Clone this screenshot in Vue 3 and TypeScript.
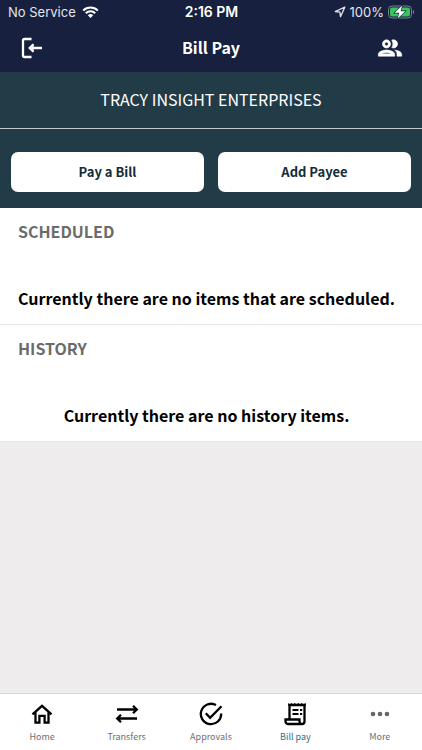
<script setup lang="ts">
import { ref } from 'vue'

interface Section {
  title: string
  message: string
}

interface Tab {
  id: string
  label: string
}

const company = 'TRACY INSIGHT ENTERPRISES'

const sections: Section[] = [
  { title: 'SCHEDULED', message: 'Currently there are no items that are scheduled.' },
  { title: 'HISTORY', message: 'Currently there are no history items.' },
]

const tabs: Tab[] = [
  { id: 'home', label: 'Home' },
  { id: 'transfers', label: 'Transfers' },
  { id: 'approvals', label: 'Approvals' },
  { id: 'billpay', label: 'Bill pay' },
  { id: 'more', label: 'More' },
]

const activeTab = ref<string>('billpay')
</script>

<template>
  <div class="app">
    <header class="top">
      <div class="status">
        <div class="status-left">
          <span>No Service</span>
          <svg class="wifi" viewBox="0 0 17 12" aria-hidden="true">
            <path d="M1.2 4.6a10.4 10.4 0 0 1 14.6 0" />
            <path d="M3.8 7.3a6.6 6.6 0 0 1 9.4 0" />
            <path class="solid" d="M8.5 12 5.8 9.3a3.8 3.8 0 0 1 5.4 0z" />
          </svg>
        </div>
        <span class="clock">2:16 PM</span>
        <div class="status-right">
          <svg class="location" viewBox="0 0 12 12" aria-hidden="true">
            <path d="M10.8 1.2 1.3 5.5l4.6.6.6 4.6z" />
          </svg>
          <span>100%</span>
          <svg class="battery" viewBox="0 0 27 14" aria-hidden="true">
            <rect x="0.5" y="1" width="23" height="12" rx="3.6" fill="none" stroke="#7d8396" />
            <rect x="2" y="2.5" width="20" height="9" rx="2.2" fill="#35c759" />
            <path d="M25 5v4c1.6-.5 1.6-3.5 0-4z" fill="#7d8396" />
            <path d="M14.2.5 6.7 7.8h4.6L9.6 13.5l7.7-7.3h-4.7z" fill="#fff" stroke="#17203e" stroke-width="1.2" paint-order="stroke" />
          </svg>
        </div>
      </div>
      <div class="nav">
        <button class="icon-button" type="button" aria-label="Log out">
          <svg class="logout" viewBox="0 0 22 22" aria-hidden="true">
            <path d="M10.5 2H3.5Q2 2 2 3.5v15Q2 20 3.5 20h7M21 11H9M12.5 7.2 8.7 11l3.8 3.8" />
            <path class="head" d="M12.5 7.2 8.7 11l3.8 3.8z" />
          </svg>
        </button>
        <h1>Bill Pay</h1>
        <button class="icon-button" type="button" aria-label="Payees">
          <svg class="people" viewBox="0 0 24 24" aria-hidden="true">
            <path d="M9 13.75c-2.34 0-7 1.17-7 3.5V19h14v-1.75c0-2.33-4.66-3.5-7-3.5zM4.34 17c.84-.58 2.87-1.25 4.66-1.25s3.82.67 4.66 1.25H4.34zM9 12c1.93 0 3.5-1.57 3.5-3.5S10.93 5 9 5 5.5 6.57 5.5 8.5 7.07 12 9 12zm0-5c.83 0 1.5.67 1.5 1.5S9.83 10 9 10s-1.5-.67-1.5-1.5S8.17 7 9 7zm7.04 6.81c1.16.84 1.96 1.96 1.96 3.44V19h4v-1.75c0-2.02-3.5-3.17-5.96-3.44zM15 12c1.93 0 3.5-1.57 3.5-3.5S16.93 5 15 5c-.54 0-1.04.13-1.5.35.63.89 1 1.98 1 3.15s-.37 2.26-1 3.15c.46.22.96.35 1.5.35z" />
          </svg>
        </button>
      </div>
    </header>

    <main>
      <h2 class="company">{{ company }}</h2>
      <div class="actions">
        <button class="action" type="button">Pay a Bill</button>
        <button class="action" type="button">Add Payee</button>
      </div>
      <section v-for="section in sections" :key="section.title" class="section">
        <h3>{{ section.title }}</h3>
        <p>{{ section.message }}</p>
      </section>
    </main>

    <nav class="tabs" aria-label="Main">
      <button
        v-for="tab in tabs"
        :key="tab.id"
        class="tab"
        :class="{ active: tab.id === activeTab }"
        type="button"
        @click="activeTab = tab.id"
      >
        <svg v-if="tab.id === 'home'" viewBox="0 0 24 24" aria-hidden="true">
          <path d="M2.5 12.3 12 3.8l9.5 8.5M5.5 10.5v10.1h3.9v-6.8h5.2v6.8h3.9V10.5" />
        </svg>
        <svg v-else-if="tab.id === 'transfers'" viewBox="0 0 24 24" aria-hidden="true">
          <path d="M2 7.5h19.5M18 3.7l3.8 3.8L18 11.3M22 16.5H2.5M6 12.7l-3.8 3.8L6 20.3" />
        </svg>
        <svg v-else-if="tab.id === 'approvals'" viewBox="0 0 24 24" aria-hidden="true">
          <path d="M17 3.1A10.2 10.2 0 1 0 22.2 11.5M6.8 11.3l4.3 4.5L22.5 4.3" />
        </svg>
        <svg v-else-if="tab.id === 'billpay'" viewBox="0 0 24 24" aria-hidden="true">
          <path d="M6.5 17V3h15v16.5a2.5 2.5 0 0 1-2.5 2.5H5a2.5 2.5 0 0 1-2.5-2.5V17.5H16.5v2a2.5 2.5 0 0 0 2.5 2.5" />
          <path class="thin" d="M9.5 8h6M17 8h2.2M9.5 12h6M17 12h2.2" />
          <path class="teeth" d="m5.3 1 1.6 1.5L8.5 1l1.7 1.5L11.9 1l1.7 1.5L15.3 1 17 2.5 18.7 1l1.6 1.5L22.7 1v3H5.3z" />
        </svg>
        <svg v-else viewBox="0 0 24 24" aria-hidden="true">
          <g class="dots">
            <circle cx="5" cy="12" r="2.3" />
            <circle cx="12" cy="12" r="2.3" />
            <circle cx="19" cy="12" r="2.3" />
          </g>
        </svg>
        <span>{{ tab.label }}</span>
      </button>
    </nav>
  </div>
</template>

<style>
body {
  margin: 0;
  background: #eeeced;
}
</style>

<style scoped>
.app {
  display: flex;
  flex-direction: column;
  min-height: 100vh;
  background: #eeeced;
  font-family: "Noto Sans CJK SC", "Noto Sans", sans-serif;
}

h1,
h2,
h3,
p {
  margin: 0;
}

button {
  padding: 0;
  border: 0;
  background: none;
  font-family: inherit;
  cursor: pointer;
}

svg {
  display: block;
}

.top {
  background: #17203e;
  color: #fff;
}

.status {
  display: grid;
  grid-template-columns: 1fr auto 1fr;
  align-items: center;
  height: 24px;
  padding: 0 7px 0 8px;
  font-family: Inter, sans-serif;
  font-size: 13px;
  color: #e4e6ec;
}

.status-left,
.status-right {
  display: flex;
  align-items: center;
  gap: 6px;
}

.status-right {
  justify-content: flex-end;
  gap: 4px;
}

.clock {
  font-size: 14px;
  line-height: 16px;
  font-weight: 600;
  color: #fff;
}

.wifi {
  width: 17px;
  height: 12px;
  fill: none;
  stroke: #fff;
  stroke-width: 2;
}

.wifi .solid {
  fill: #fff;
  stroke: none;
}

.location {
  width: 12px;
  height: 12px;
  fill: none;
  stroke: #e4e6ec;
  stroke-width: 1.3;
  stroke-linejoin: round;
}

.battery {
  width: 27px;
  height: 14px;
}

.nav {
  display: flex;
  align-items: center;
  justify-content: space-between;
  height: 48px;
  padding: 0 18px;
}

.icon-button {
  color: #fff;
}

.logout {
  width: 28px;
  height: 22px;
  fill: none;
  stroke: currentColor;
  stroke-width: 2.3;
}

.logout .head {
  fill: currentColor;
  stroke: none;
}

.people {
  width: 28px;
  height: 28px;
  fill: currentColor;
  stroke: currentColor;
  stroke-width: 0.5;
}

h1 {
  padding-bottom: 2px;
  font-size: 16px;
  line-height: 24px;
  font-weight: 700;
}

.company {
  padding: 15px 12px 17px;
  border-bottom: 1px solid #c3cacd;
  background: #223c47;
  color: #fff;
  font-size: 16px;
  line-height: 24px;
  font-weight: 400;
  text-align: center;
}

.actions {
  display: flex;
  gap: 14px;
  padding: 23px 11px 16px;
  background: #223c47;
}

.action {
  flex: 1;
  height: 40px;
  border-radius: 7px;
  background: #fff;
  color: #122c38;
  font-size: 13px;
  line-height: 20px;
  font-weight: 700;
}

.section {
  padding: 11px 27px 14px 18px;
  border-bottom: 1px solid #e8e8e8;
  background: #fff;
}

h3 {
  color: #6b6b6b;
  font-size: 16px;
  line-height: 24px;
  font-weight: 700;
}

.section p {
  margin-top: 43px;
  color: #000;
  font-size: 16px;
  line-height: 24px;
  font-weight: 700;
  text-align: center;
}

.tabs {
  display: grid;
  grid-template-columns: repeat(5, 1fr);
  margin-top: auto;
  border-top: 1px solid #d6d5d6;
  background: #fff;
}

.tab {
  display: flex;
  flex-direction: column;
  align-items: center;
  gap: 3px;
  padding: 8px 0 5px;
  color: #6f6f6f;
  font-size: 9px;
  line-height: 16px;
}

.tab.active {
  color: #306f8e;
}

.tab svg {
  width: 24px;
  height: 24px;
  fill: none;
  stroke: #000;
  stroke-width: 2.3;
}

.tab .thin {
  stroke-width: 2;
}

.tab .teeth {
  fill: #000;
  stroke: none;
}

.tab .dots {
  fill: #666;
  stroke: none;
}
</style>
